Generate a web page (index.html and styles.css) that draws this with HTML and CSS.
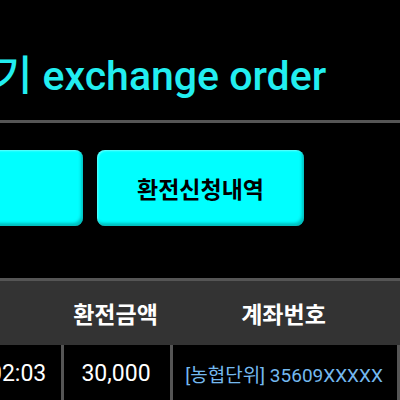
FILE: index.html
```html
<!DOCTYPE html>
<html lang="ko">

<head>
    <meta charset="utf-8">
    <meta name="viewport" content="width=device-width, initial-scale=1.0">
    <title>환전신청</title>
    <link rel="stylesheet" href="styles.css">
</head>

<body>
    <div class="page">
        <h1 class="title">환전신청하기 <span class="en">exchange order</span></h1>
        <div class="divider"></div>

        <nav class="tabs">
            <button class="tab tab_wide">환전신청</button>
            <button class="tab valgt">환전신청내역</button>
        </nav>

        <section class="list">
            <div class="list_head">
                <div class="cell">신청일시</div>
                <div class="cell">환전금액</div>
                <div class="cell">계좌번호</div>
            </div>
            <div class="list_row">
                <div class="cell date">2023-05-12 12:02:03</div>
                <div class="cell">30,000</div>
                <div class="cell account">[농협단위] 35609XXXXX</div>
            </div>
        </section>
    </div>
</body></html>
```

FILE: styles.css
```css
* {
    box-sizing: border-box;
}

body {
    margin: 0;
    background-color: #000;
    overflow: hidden;
    font-family: Roboto, "Noto Sans CJK KR", sans-serif;
}

.page {
    width: 400px;
    height: 400px;
    overflow: hidden;
}

/*Titel*/
.title {
    margin: 0 0 0 -194px;
    padding-top: 48px;
    font-size: 41px;
    line-height: 56px;
    font-weight: 500;
    color: #22eef0;
    white-space: nowrap;
}

.divider {
    height: 3px;
    margin-top: 16px;
    background-color: #555;
}

/*Knapper*/
.tabs {
    display: flex;
    gap: 14px;
    margin: 27px 0 0 -324px;
}

.tab {
    flex: 0 0 207px;
    height: 76px;
    border: none;
    border-radius: 8px;
    background-color: #00ffff;
    box-shadow: inset -2px -3px 3px rgba(0, 110, 110, 0.45), inset 1px 1px 2px rgba(255, 255, 255, 0.4);
    font-family: Roboto, "Noto Sans CJK KR", sans-serif;
    font-size: 23px;
    font-weight: 700;
    color: #000;
    padding: 0;
}

.tab_wide {
    flex-basis: 407px;
    padding-right: 200px;
}

/*Liste*/
.list {
    margin: 52px 0 0 -169px;
    width: 569px;
}

.list_head,
.list_row {
    display: grid;
    grid-template-columns: 233px 109px 227px;
}

.list_head {
    background-color: #333;
    border-top: 3px solid #555;
    height: 67px;
    color: #fff;
    font-size: 23px;
    font-weight: 700;
}

.list_head .cell {
    display: flex;
    align-items: center;
    justify-content: center;
    padding-right: 6px;
}

.list_row {
    height: 60px;
    color: #fff;
    font-size: 23px;
}

.list_row .cell {
    display: flex;
    align-items: center;
    justify-content: center;
    border-right: 3px solid #555;
    padding: 0 2px 4px 0;
    white-space: nowrap;
}

.list_row .date {
    padding-right: 10px;
}

.account {
    color: #74b9ef;
    font-size: 19px;
}
```
